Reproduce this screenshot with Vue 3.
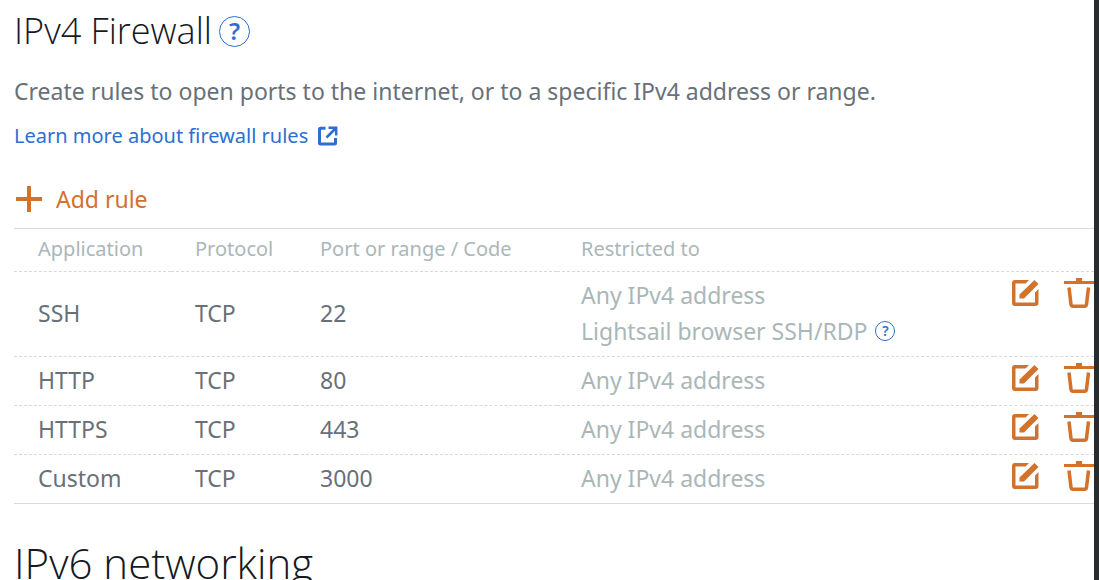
<script setup>
const rules = [
  { app: 'SSH', protocol: 'TCP', port: '22', sources: ['Any IPv4 address', 'Lightsail browser SSH/RDP'] },
  { app: 'HTTP', protocol: 'TCP', port: '80', sources: ['Any IPv4 address'] },
  { app: 'HTTPS', protocol: 'TCP', port: '443', sources: ['Any IPv4 address'] },
  { app: 'Custom', protocol: 'TCP', port: '3000', sources: ['Any IPv4 address'] },
]
</script>

<template>
  <main class="page">
    <header class="heading">
      <h1 class="title">IPv4 Firewall</h1>
      <button class="help" type="button" aria-label="About the IPv4 firewall">?</button>
    </header>
    <p class="intro">Create rules to open ports to the internet, or to a specific IPv4 address or range.</p>
    <a class="learn" href="#firewall-rules">
      <span>Learn more about firewall rules</span>
      <svg class="external" viewBox="0 0 20 20" aria-hidden="true">
        <path d="M7.500 2.200H2.500Q1.500 2.200 1.500 3.200V17Q1.500 18 2.500 18H16.500Q17.500 18 17.500 17V12" />
        <path class="arrow" d="M10.500 1.700H18.200V9.500M17.500 2.500L8.500 11.500" />
      </svg>
    </a>
    <button class="add" type="button">
      <svg class="plus" viewBox="0 0 26 26" aria-hidden="true"><path d="M13 0V26M0 13H26" /></svg>
      <span>Add rule</span>
    </button>
    <table class="rules">
      <colgroup>
        <col class="c-app" />
        <col class="c-protocol" />
        <col class="c-port" />
        <col />
        <col class="c-actions" />
      </colgroup>
      <thead>
        <tr>
          <th scope="col">Application</th>
          <th scope="col">Protocol</th>
          <th scope="col">Port or range / Code</th>
          <th scope="col" colspan="2">Restricted to</th>
        </tr>
      </thead>
      <tbody>
        <tr v-for="rule in rules" :key="rule.app">
          <td>{{ rule.app }}</td>
          <td>{{ rule.protocol }}</td>
          <td>{{ rule.port }}</td>
          <td class="sources">
            <div v-for="(source, i) in rule.sources" :key="source" class="source">
              <span>{{ source }}</span>
              <button v-if="i === 1" class="help small" type="button" aria-label="About browser access">?</button>
            </div>
          </td>
          <td class="actions">
            <div class="buttons">
              <button class="icon" type="button" :aria-label="`Edit ${rule.app} rule`">
                <svg class="edit" viewBox="0 0 27 27" aria-hidden="true">
                  <path
                    class="fill"
                    d="M17 0L13.500 3.500H3.500V22.500H23V12.500L26.500 9V23Q26.500 26 23.500 26H3Q0 26 0 23V3Q0 0 3 0Z"
                  />
                  <path class="fill" d="M22.500 0L26.500 4L12 18.500H7.500V14.500Z" />
                </svg>
              </button>
              <button class="icon" type="button" :aria-label="`Delete ${rule.app} rule`">
                <svg class="trash" viewBox="0 0 30 30" aria-hidden="true">
                  <path class="fill" d="M12 0H18V3H30V6H0V3H12Z" />
                  <path class="line" d="M5 9.500L7 26.500Q7.200 28.300 9 28.300H20.500Q22.300 28.300 22.500 26.500L24.500 9.500" />
                </svg>
              </button>
            </div>
          </td>
        </tr>
      </tbody>
    </table>
    <h2 class="title large">IPv6 networking</h2>
  </main>
</template>

<style>
body {
  background: #fff;
}

html,
body {
  overflow: hidden;
}
</style>

<style scoped>
.page {
  box-sizing: border-box;
  height: 100vh;
  padding: 9px 0 0 14px;
  overflow: hidden;
  border-right: 5px solid #292c2e;
  color: #687078;
  font-family: "Noto Sans", "Open Sans", sans-serif;
  font-size: 23px;
}

button {
  padding: 0;
  border: 0;
  background: none;
  font-family: inherit;
  cursor: pointer;
}

svg {
  display: block;
  flex: none;
  fill: none;
}

.heading {
  display: flex;
  align-items: center;
  gap: 7px;
}

.title {
  margin: 0;
  color: #16191f;
  font-family: "Open Sans", "Noto Sans", sans-serif;
  font-size: 36px;
  font-weight: 300;
  line-height: 44px;
}

.help {
  box-sizing: border-box;
  width: 31px;
  height: 31px;
  border: 1px solid #2f6ed0;
  border-radius: 50%;
  color: #2f6ed0;
  font-size: 24px;
  font-weight: 600;
  line-height: 28px;
}

.help.small {
  width: 20px;
  height: 20px;
  font-size: 14px;
  line-height: 18px;
}

.intro {
  margin: 20px 0 0;
  line-height: 36px;
}

.learn {
  display: flex;
  align-items: center;
  gap: 10px;
  width: max-content;
  margin-top: 11px;
  color: #2f6ed0;
  font-size: 20px;
  line-height: 32px;
  text-decoration: none;
}

.external {
  width: 20px;
  height: 20px;
  stroke: #2f6ed0;
  stroke-width: 3;
}

.external .arrow {
  stroke-width: 2.500;
}

.add {
  display: flex;
  align-items: center;
  gap: 14px;
  margin-top: 29px;
  padding-left: 2px;
  color: #d1722d;
  font-size: 23px;
  line-height: 36px;
}

.plus {
  width: 26px;
  height: 26px;
  stroke: #d1722d;
  stroke-width: 4;
}

.rules {
  width: 100%;
  margin-top: 11px;
  border-top: 1px solid #d5dbdb;
  border-bottom: 1px solid #d5dbdb;
  border-spacing: 0;
  table-layout: fixed;
}

.c-app {
  width: 157px;
}

.c-protocol {
  width: 125px;
}

.c-port {
  width: 261px;
}

.c-actions {
  width: 100px;
}

th,
td {
  padding: 5px 0 7px 24px;
  line-height: 36px;
  text-align: left;
  white-space: nowrap;
}

th {
  padding-top: 2px;
  padding-bottom: 4px;
  border-bottom: 1px dashed #d5dbdb;
  color: #aab7b8;
  font-size: 20px;
  font-weight: 400;
}

tbody tr:not(:last-child) td {
  border-bottom: 1px dashed #d5dbdb;
}

.sources {
  color: #aab7b8;
}

.source {
  display: flex;
  align-items: center;
  gap: 8px;
}

.actions {
  padding: 6px 0 0;
  vertical-align: top;
}

.buttons {
  display: flex;
  align-items: center;
  justify-content: flex-end;
  gap: 25px;
}

.edit {
  width: 27px;
  height: 27px;
}

.trash {
  width: 30px;
  height: 30px;
}

.icon {
  display: block;
}

.icon .line {
  stroke: #d1722d;
  stroke-width: 3.500;
}

.icon .fill {
  fill: #d1722d;
}

.title.large {
  margin-top: 33px;
  font-size: 42px;
  line-height: 52px;
}
</style>
